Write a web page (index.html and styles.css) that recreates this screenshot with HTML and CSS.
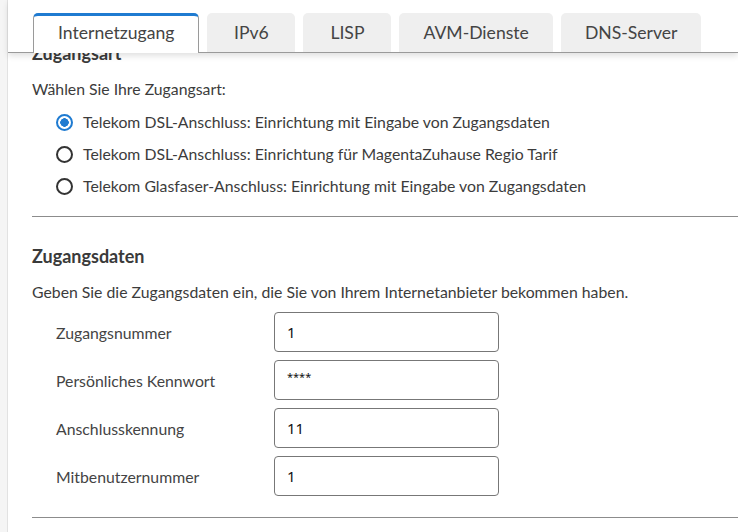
FILE: index.html
```html
<!DOCTYPE html>
<html lang="de">
<head>
    <meta charset="UTF-8">
    <meta name="viewport" content="width=device-width, initial-scale=1.0">
    <title>Internetzugang</title>
    <link rel="stylesheet" href="styles.css">
</head>
<body>
    <div class="panel">
        <nav class="tabs">
            <a class="tab active" href="#">Internetzugang</a>
            <a class="tab" href="#">IPv6</a>
            <a class="tab" href="#">LISP</a>
            <a class="tab" href="#">AVM-Dienste</a>
            <a class="tab" href="#">DNS-Server</a>
        </nav>

        <main class="content">
            <section class="block first">
                <h2 class="block-title">Zugangsart</h2>
                <p class="hint">Wählen Sie Ihre Zugangsart:</p>
                <div class="radio-list">
                    <label class="radio-row">
                        <input type="radio" name="access" checked>
                        <span>Telekom DSL-Anschluss: Einrichtung mit Eingabe von Zugangsdaten</span>
                    </label>
                    <label class="radio-row">
                        <input type="radio" name="access">
                        <span>Telekom DSL-Anschluss: Einrichtung für MagentaZuhause Regio Tarif</span>
                    </label>
                    <label class="radio-row">
                        <input type="radio" name="access">
                        <span>Telekom Glasfaser-Anschluss: Einrichtung mit Eingabe von Zugangsdaten</span>
                    </label>
                </div>
            </section>

            <hr class="divider">

            <section class="block">
                <h2 class="block-title">Zugangsdaten</h2>
                <p class="hint">Geben Sie die Zugangsdaten ein, die Sie von Ihrem Internetanbieter bekommen haben.</p>
                <div class="form-rows">
                    <div class="form-row">
                        <label for="user">Zugangsnummer</label>
                        <input id="user" type="text" value="1">
                    </div>
                    <div class="form-row">
                        <label for="pass">Persönliches Kennwort</label>
                        <input id="pass" class="masked" type="text" value="****">
                    </div>
                    <div class="form-row">
                        <label for="line">Anschlusskennung</label>
                        <input id="line" type="text" value="11">
                    </div>
                    <div class="form-row">
                        <label for="co">Mitbenutzernummer</label>
                        <input id="co" type="text" value="1">
                    </div>
                </div>
            </section>

            <hr class="divider">
        </main>
    </div>
</body>
</html>
```

FILE: styles.css
```css
body {
    margin: 0;
    background: #f5f5f5;
    font-family: Lato, 'Noto Sans', sans-serif;
    font-size: 15.8px;
    color: #3c3c3c;
    overflow: hidden;
}

.panel {
    margin-left: 7px;
    border-left: 1px solid #e2e2e2;
    background: white;
    min-height: 100vh;
}

.tabs {
    position: relative;
    z-index: 2;
    display: flex;
    gap: 8px;
    padding: 13px 0 0 25px;
    background: white;
    border-bottom: 1px solid #9a9a9a;
    box-shadow: 0 3px 6px rgba(0, 0, 0, 0.12);
}

.tab {
    display: block;
    min-width: 88px;
    height: 39px;
    box-sizing: border-box;
    padding: 8px 23px 0;
    border: 1px solid transparent;
    border-bottom: none;
    border-radius: 5px 5px 0 0;
    background: #efefef;
    color: #444;
    font-size: 17.6px;
    text-align: center;
    text-decoration: none;
    margin-bottom: -1px;
}

.tab.active {
    height: 40px;
    padding: 6px 24px 0;
    background: white;
    border-color: #9a9a9a;
    border-top: 3px solid #1f7bd1;
}

.content {
    padding: 0 0 0 24px;
}

.block-title {
    margin: 0;
    font-size: 18px;
    line-height: 24px;
    font-weight: bold;
    color: #3a3a3a;
}

.block.first .block-title {
    margin-top: -12px;
}

.hint {
    margin: 13px 0 0;
    line-height: 22px;
}

.radio-list {
    margin-top: 6px;
    padding-left: 24px;
}

.radio-row {
    display: flex;
    align-items: center;
    gap: 10px;
    height: 32px;
}

.radio-row span {
    position: relative;
    top: -1px;
}

.radio-row input {
    appearance: none;
    -webkit-appearance: none;
    margin: 0;
    width: 17px;
    height: 17px;
    border: 2px solid #333;
    border-radius: 50%;
    box-sizing: border-box;
}

.radio-row input:checked {
    border-color: #1f7bd1;
    background: radial-gradient(circle, #1f7bd1 0 4px, white 4.5px);
}

.divider {
    margin: 14px 0 0;
    height: 0;
    border: none;
    border-top: 1px solid #8c8c8c;
}

.block + .divider + .block .block-title {
    margin-top: 27px;
}

.block + .divider + .block .hint {
    margin-top: 13px;
}

.form-rows {
    margin-top: 9px;
    padding-left: 24px;
    display: grid;
    gap: 8px;
}

.form-row {
    display: grid;
    grid-template-columns: 218px 225px;
    align-items: center;
}

.form-row label {
    color: #444;
}

.form-row input {
    height: 40px;
    box-sizing: border-box;
    padding: 0 12px;
    border: 1px solid #777;
    border-radius: 4px;
    font-family: 'Noto Sans', sans-serif;
    font-size: 15px;
    color: #111;
}

.form-row input.masked {
    font-size: 11px;
    padding-bottom: 8px;
}

.form-rows + .divider,
.block:last-of-type + .divider {
    margin-top: 21px;
}
```
